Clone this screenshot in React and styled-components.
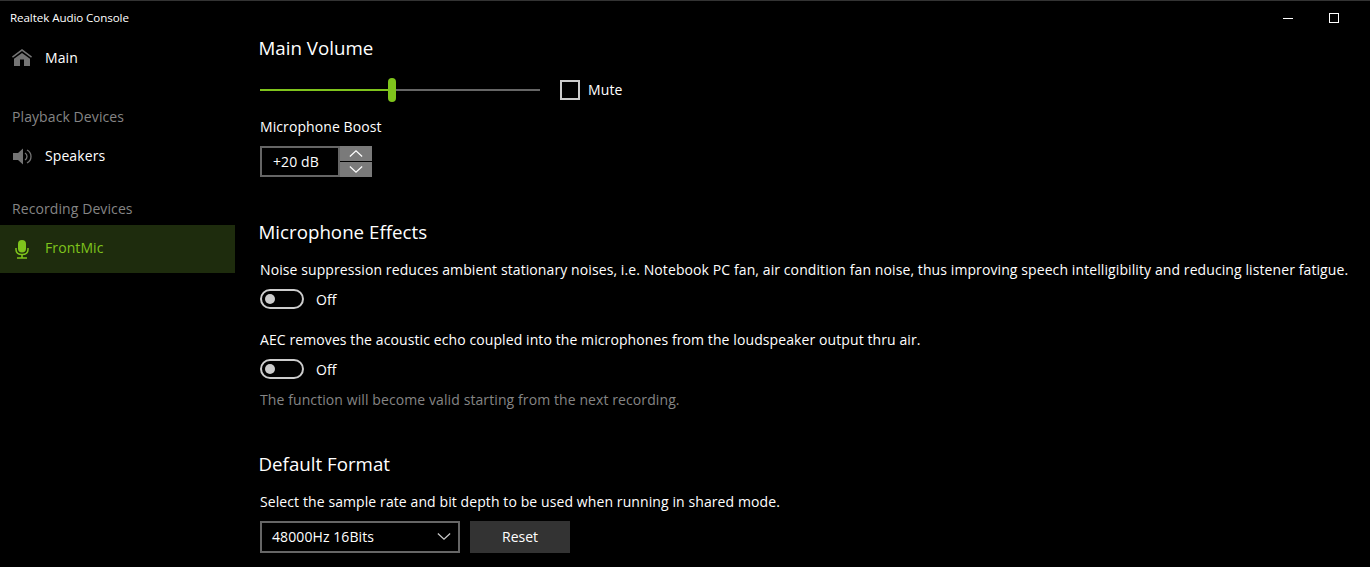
import React from "react";
import styled, { createGlobalStyle } from "styled-components";

const Global = createGlobalStyle`
  html, body { margin: 0; padding: 0; background: #000; }
  body { font-family: "Open Sans", "Noto Sans", sans-serif; color: #fff; }
`;

const Window = styled.div`
  width: 1370px;
  height: 567px;
  background: #000;
  overflow: hidden;
  display: flex;
  flex-direction: column;
  border-top: 1px solid #333;
  box-sizing: border-box;
`;

const TitleBar = styled.header`
  height: 33px;
  flex: none;
  display: flex;
  align-items: center;
  justify-content: space-between;
  padding: 0 13px 0 10px;
  box-sizing: border-box;
  font-size: 11.6px;
  letter-spacing: -0.08px;
`;

const WindowButtons = styled.div`
  display: flex;
  align-items: center;
`;

const WindowButton = styled.div`
  width: 46px;
  height: 32px;
  display: flex;
  align-items: center;
  justify-content: center;
  svg { display: block; }
`;

const Body = styled.div`
  flex: 1;
  display: flex;
  min-height: 0;
`;

const Sidebar = styled.nav`
  width: 235px;
  flex: none;
  display: flex;
  flex-direction: column;
`;

const NavItem = styled.div`
  height: 48px;
  display: flex;
  align-items: center;
  font-size: 14px;
  letter-spacing: 0.09px;
  color: ${(p) => (p.$active ? "#7fc41c" : "#fff")};
  background: ${(p) => (p.$active ? "#1e2c0d" : "transparent")};
`;

const NavText = styled.span`
  padding-bottom: ${(p) => p.$lift || 2}px;
`;

const NavIcon = styled.span`
  width: 45px;
  flex: none;
  display: flex;
  justify-content: center;
  padding-right: 1px;
  box-sizing: border-box;
  svg { display: block; }
`;

const NavLabel = styled.div`
  font-size: 14px;
  letter-spacing: 0.09px;
  line-height: 20px;
  color: #858585;
  padding-left: 12px;
  margin-top: ${(p) => p.$top}px;
  margin-bottom: ${(p) => p.$bottom}px;
`;

const Content = styled.main`
  flex: 1;
  padding-left: 25px;
  min-width: 0;
`;

const Heading = styled.h2`
  margin: 0 0 0 -1.5px;
  padding-top: ${(p) => p.$top || 0}px;
  font-weight: 400;
  font-size: 18.73px;
  line-height: 28px;
`;

const VolumeRow = styled.div`
  display: flex;
  align-items: center;
  height: 24px;
  margin-top: 16px;
`;

const Slider = styled.div`
  width: 280px;
  height: 24px;
  display: flex;
  align-items: center;
`;

const TrackFill = styled.div`
  height: 2px;
  background: #7fc41c;
`;

const TrackRest = styled.div`
  height: 2px;
  flex: 1;
  background: #666;
`;

const Thumb = styled.div`
  width: 8px;
  height: 24px;
  border-radius: 4px;
  background: #7fc41c;
  flex: none;
`;

const Mute = styled.label`
  display: flex;
  align-items: center;
  margin-left: 20px;
  font-size: 14px;
  letter-spacing: 0.12px;
`;

const MuteText = styled.span`
  padding-bottom: 2px;
`;

const CheckBox = styled.span`
  width: 20px;
  height: 20px;
  box-sizing: border-box;
  border: 2px solid #ccc;
  margin-right: 8px;
`;

const FieldLabel = styled.div`
  font-size: 14px;
  letter-spacing: 0.09px;
  line-height: 20px;
  margin-top: ${(p) => p.$top}px;
`;

const Spinner = styled.div`
  display: flex;
  margin-top: 9px;
  height: 31px;
`;

const SpinnerValue = styled.div`
  width: 80px;
  box-sizing: border-box;
  border: 2px solid #666;
  display: flex;
  align-items: center;
  padding-left: 11px;
  font-size: 14px;
  letter-spacing: 0.09px;
`;

const SpinnerButtons = styled.div`
  width: 32px;
  display: flex;
  flex-direction: column;
  justify-content: space-between;
`;

const SpinnerButton = styled.div`
  height: 15px;
  background: #7a7a7a;
  display: flex;
  align-items: center;
  justify-content: center;
  svg { display: block; }
`;

const Paragraph = styled.p`
  margin: ${(p) => p.$top}px 0 0;
  font-size: 14px;
  letter-spacing: 0.095px;
  line-height: 20px;
  white-space: nowrap;
  color: ${(p) => (p.$muted ? "#858585" : "#fff")};
`;

const ToggleRow = styled.div`
  display: flex;
  align-items: center;
  height: 20px;
  margin-top: ${(p) => p.$top}px;
  font-size: 14px;
`;

const ToggleTrack = styled.span`
  width: 44px;
  height: 20px;
  box-sizing: border-box;
  border: 2px solid #ccc;
  border-radius: 10px;
  display: flex;
  align-items: center;
  padding-left: 3px;
  margin-right: 12px;
`;

const ToggleKnob = styled.span`
  width: 10px;
  height: 10px;
  border-radius: 50%;
  background: #ccc;
`;

const FormatRow = styled.div`
  display: flex;
  margin-top: 9px;
  height: 32px;
`;

const Select = styled.div`
  width: 200px;
  box-sizing: border-box;
  border: 2px solid #666;
  display: flex;
  align-items: center;
  justify-content: space-between;
  padding: 0 7px 1px 10px;
  font-size: 14px;
  letter-spacing: 0.09px;
  svg { display: block; }
`;

const Button = styled.div`
  width: 100px;
  margin-left: 10px;
  padding-bottom: 1px;
  box-sizing: border-box;
  background: #333;
  display: flex;
  align-items: center;
  justify-content: center;
  font-size: 14px;
`;

const Toggle = ({ top }) => (
  <ToggleRow $top={top}>
    <ToggleTrack><ToggleKnob /></ToggleTrack>
    Off
  </ToggleRow>
);

const Chevron = ({ up, w = 14, h = 7, color = "#fff" }) => (
  <svg width={w} height={h} viewBox="0 0 16 8" fill="none">
    <path d={up ? "M1 7.5 8 1l7 6.5" : "M1 .5 8 7l7-6.5"} stroke={color} strokeWidth="1.4" />
  </svg>
);

export default function App() {
  return (
    <Window>
      <Global />
      <TitleBar>
        <span>Realtek Audio Console</span>
        <WindowButtons>
          <WindowButton>
            <svg width="10" height="10" viewBox="0 0 10 10"><path d="M0 5.5h10" stroke="#fff" strokeWidth="1" /></svg>
          </WindowButton>
          <WindowButton>
            <svg width="10" height="10" viewBox="0 0 10 10"><rect x=".5" y=".5" width="9" height="9" fill="none" stroke="#fff" /></svg>
          </WindowButton>
        </WindowButtons>
      </TitleBar>
      <Body>
        <Sidebar>
          <NavItem>
            <NavIcon>
              <svg width="20" height="18" viewBox="0 0 20 18" fill="#747474">
                <path d="M10 0 0 7.6l.9 1.1L10 2l9.1 6.7 .9-1.1Z" />
                <path d="M10 4 2 9.8V17h6v-6.5h4V17h6V9.8Z" />
              </svg>
            </NavIcon>
            <NavText>Main</NavText>
          </NavItem>
          <NavLabel $top={25} $bottom={5}>Playback Devices</NavLabel>
          <NavItem>
            <NavIcon>
              <svg width="20" height="17" viewBox="0 0 20 17" fill="#747474">
                <path d="M1 5h5L11 .5v16L6 12H1Z" />
                <path d="M13 5c1.5 1 2 2.2 2 3.5s-.5 2.5-2 3.5" fill="none" stroke="#747474" strokeWidth="1.3" />
                <path d="M15 2c3 1.6 4 4 4 6.5s-1 4.9-4 6.5" fill="none" stroke="#747474" strokeWidth="1.3" />
              </svg>
            </NavIcon>
            <NavText>Speakers</NavText>
          </NavItem>
          <NavLabel $top={19} $bottom={6}>Recording Devices</NavLabel>
          <NavItem $active>
            <NavIcon>
              <svg width="14" height="19" viewBox="0 0 14 19" fill="#7fc41c">
                <rect x="3" y="0" width="8" height="12.5" rx="4" />
                <path d="M1 8v1.5c0 3.2 2.6 5 6 5s6-1.8 6-5V8" fill="none" stroke="#7fc41c" strokeWidth="1.5" />
                <path d="M7 14.5V17.5M2 18h10" stroke="#7fc41c" strokeWidth="1.6" fill="none" />
              </svg>
            </NavIcon>
            <NavText $lift={4}>FrontMic</NavText>
          </NavItem>
        </Sidebar>
        <Content>
          <Heading>Main Volume</Heading>
          <VolumeRow>
            <Slider>
              <TrackFill style={{ width: 128 }} />
              <Thumb />
              <TrackRest />
            </Slider>
            <Mute><CheckBox /><MuteText>Mute</MuteText></Mute>
          </VolumeRow>
          <FieldLabel $top={15}>Microphone Boost</FieldLabel>
          <Spinner>
            <SpinnerValue>+20 dB</SpinnerValue>
            <SpinnerButtons>
              <SpinnerButton><Chevron up /></SpinnerButton>
              <SpinnerButton><Chevron /></SpinnerButton>
            </SpinnerButtons>
          </Spinner>
          <Heading $top={41}>Microphone Effects</Heading>
          <Paragraph $top={14}>Noise suppression reduces ambient stationary noises, i.e. Notebook PC fan, air condition fan noise, thus improving speech intelligibility and reducing listener fatigue.</Paragraph>
          <Toggle top={9} />
          <Paragraph $top={21}>AEC removes the acoustic echo coupled into the microphones from the loudspeaker output thru air.</Paragraph>
          <Toggle top={9} />
          <Paragraph $muted $top={11}>The function will become valid starting from the next recording.</Paragraph>
          <Heading $top={40}>Default Format</Heading>
          <Paragraph $top={14}>Select the sample rate and bit depth to be used when running in shared mode.</Paragraph>
          <FormatRow>
            <Select>48000Hz 16Bits<Chevron color="#ccc" /></Select>
            <Button>Reset</Button>
          </FormatRow>
        </Content>
      </Body>
    </Window>
  );
}
